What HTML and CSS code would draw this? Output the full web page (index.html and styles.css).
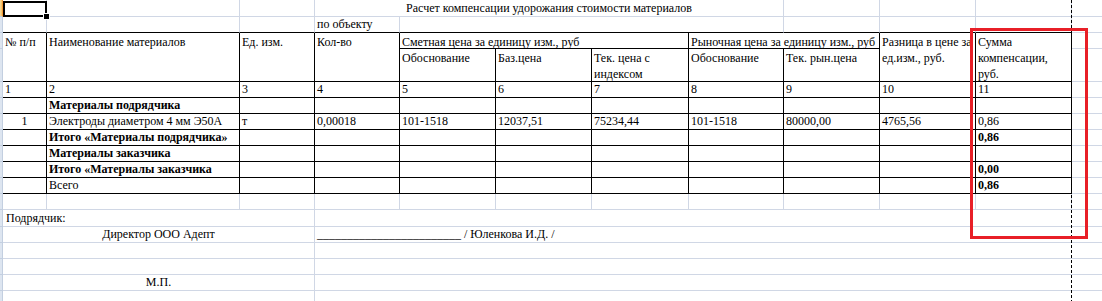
FILE: index.html
```html
<!DOCTYPE html>
<html lang="ru">
<head>
<meta charset="utf-8">
<title>Расчет компенсации удорожания стоимости материалов</title>
<link rel="stylesheet" href="styles.css">
</head>
<body>
<div class="sheet">
  <div class="grid">
    <!-- row 1 -->
    <div class="rh rh-sel"></div>
    <div class="c"></div><div class="c"></div><div class="c"></div>
    <div class="c s5 center">Расчет компенсации удорожания стоимости материалов</div>
    <div class="c"></div><div class="c"></div><div class="c"></div><div class="c"></div>
    <!-- row 2 -->
    <div class="rh"></div>
    <div class="c tt"></div><div class="c tt"></div><div class="c tt"></div>
    <div class="c tt">по объекту</div>
    <div class="c tt s4"></div>
    <div class="c tt"></div><div class="c tt"></div><div class="c tt"></div><div class="c"></div>
    <!-- rows 3-4 header -->
    <div class="rh"></div>
    <div class="c t r2 top">№ п/п</div>
    <div class="c t r2 top">Наименование материалов</div>
    <div class="c t r2 top">Ед. изм.</div>
    <div class="c t r2 top">Кол-во</div>
    <div class="c t s3 top">Сметная цена за единицу изм., руб</div>
    <div class="c t s2 top">Рыночная цена за единицу изм., руб</div>
    <div class="c t r2 top">Разница в цене за<br>ед.изм., руб.</div>
    <div class="c t r2 top">Сумма<br>компенсации,<br>руб.</div>
    <div class="c"></div>
    <div class="rh"></div>
    <div class="c t top">Обоснование</div>
    <div class="c t top">Баз.цена</div>
    <div class="c t top">Тек. цена с<br>индексом</div>
    <div class="c t top">Обоснование</div>
    <div class="c t top">Тек. рын.цена</div>
    <div class="c"></div>
    <!-- row 5 -->
    <div class="rh"></div>
    <div class="c t">1</div><div class="c t">2</div><div class="c t">3</div><div class="c t">4</div>
    <div class="c t">5</div><div class="c t">6</div><div class="c t">7</div><div class="c t">8</div>
    <div class="c t">9</div><div class="c t">10</div><div class="c t">11</div><div class="c"></div>
    <!-- row 6 -->
    <div class="rh"></div>
    <div class="c t"></div><div class="c t b">Материалы подрядчика</div>
    <div class="c t"></div><div class="c t"></div><div class="c t"></div><div class="c t"></div>
    <div class="c t"></div><div class="c t"></div><div class="c t"></div><div class="c t"></div>
    <div class="c t"></div><div class="c"></div>
    <!-- row 7 -->
    <div class="rh"></div>
    <div class="c t center">1</div>
    <div class="c t">Электроды диаметром 4 мм Э50А</div>
    <div class="c t">т</div>
    <div class="c t">0,00018</div>
    <div class="c t">101-1518</div>
    <div class="c t">12037,51</div>
    <div class="c t">75234,44</div>
    <div class="c t">101-1518</div>
    <div class="c t">80000,00</div>
    <div class="c t">4765,56</div>
    <div class="c t">0,86</div>
    <div class="c"></div>
    <!-- row 8 -->
    <div class="rh"></div>
    <div class="c t"></div><div class="c t b">Итого «Материалы подрядчика»</div>
    <div class="c t"></div><div class="c t"></div><div class="c t"></div><div class="c t"></div>
    <div class="c t"></div><div class="c t"></div><div class="c t"></div><div class="c t"></div>
    <div class="c t b">0,86</div><div class="c"></div>
    <!-- row 9 -->
    <div class="rh"></div>
    <div class="c t"></div><div class="c t b">Материалы заказчика</div>
    <div class="c t"></div><div class="c t"></div><div class="c t"></div><div class="c t"></div>
    <div class="c t"></div><div class="c t"></div><div class="c t"></div><div class="c t"></div>
    <div class="c t"></div><div class="c"></div>
    <!-- row 10 -->
    <div class="rh"></div>
    <div class="c t"></div><div class="c t b">Итого «Материалы заказчика</div>
    <div class="c t"></div><div class="c t"></div><div class="c t"></div><div class="c t"></div>
    <div class="c t"></div><div class="c t"></div><div class="c t"></div><div class="c t"></div>
    <div class="c t b">0,00</div><div class="c"></div>
    <!-- row 11 -->
    <div class="rh"></div>
    <div class="c t"></div><div class="c t">Всего</div>
    <div class="c t"></div><div class="c t"></div><div class="c t"></div><div class="c t"></div>
    <div class="c t"></div><div class="c t"></div><div class="c t"></div><div class="c t"></div>
    <div class="c t b">0,86</div><div class="c"></div>
    <!-- row 12 -->
    <div class="rh"></div>
    <div class="c"></div><div class="c"></div><div class="c"></div><div class="c"></div>
    <div class="c"></div><div class="c"></div><div class="c"></div><div class="c"></div>
    <div class="c"></div><div class="c"></div><div class="c"></div><div class="c"></div>
    <!-- row 13 -->
    <div class="rh"></div>
    <div class="c s3 pad">Подрядчик:</div>
    <div class="c s9"></div>
    <!-- row 14 -->
    <div class="rh"></div>
    <div class="c s3 center">Директор ООО Адепт</div>
    <div class="c s9">________________________ / Юленкова И.Д. /</div>
    <!-- row 15 -->
    <div class="rh"></div>
    <div class="c s3"></div>
    <div class="c s9"></div>
    <!-- row 16 -->
    <div class="rh"></div>
    <div class="c s3"></div>
    <div class="c s9"></div>
    <!-- row 17 -->
    <div class="rh"></div>
    <div class="c s3 center">М.П.</div>
    <div class="c s9"></div>
    <!-- row 18 -->
    <div class="rh"></div>
    <div class="c s3"></div>
    <div class="c s9"></div>
  </div>

  <div class="selection"><span class="fill-handle"></span></div>
  <div class="page-break"></div>
  <div class="highlight"></div>
</div>
</body>
</html>
```

FILE: styles.css
```css
html, body {
  margin: 0;
  padding: 0;
  background: #ffffff;
  overflow: hidden;
}

.sheet {
  position: relative;
  width: 1102px;
  height: 301px;
  overflow: hidden;
  font-family: "Liberation Serif", "Times New Roman", serif;
  font-size: 12px;
  color: #000;
}

.grid {
  display: grid;
  grid-template-columns: 3px 44px 193px 75px 85px 96px 96px 97px 95px 96px 96px 96px 40px;
  grid-template-rows: 17px 16px 16px 33px 16px 16px 16px 16px 16px 16px 16px 16px 17px 16px 16px 16px 16px 16px;
}

.rh {
  background: #dde5f0;
  border-right: 1px solid #c3cfe0;
  border-bottom: 1px solid #c3cfe0;
}

.rh-sel {
  background: linear-gradient(to right, #f9d99f, #f1c15f);
  border-right-color: #f29536;
}

.c {
  box-sizing: border-box;
  border-right: 1px solid #d0d7e5;
  border-bottom: 1px solid #d0d7e5;
  padding: 0 2px;
  line-height: 15px;
  white-space: nowrap;
  overflow: visible;
  display: flex;
  align-items: flex-end;
  min-width: 0;
}

.c.t {
  border-right-color: #000;
  border-bottom-color: #000;
}

.c.tt {
  border-bottom-color: #000;
}

.c.top {
  display: block;
  line-height: 16px;
  padding-top: 1px;
}

.c.b {
  font-weight: bold;
}

.c.center {
  justify-content: center;
}

.c.pad {
  padding-left: 3px;
}

.s2 { grid-column: span 2; }
.s3 { grid-column: span 3; }
.s4 { grid-column: span 4; }
.s5 { grid-column: span 5; }
.s9 { grid-column: span 9; }
.r2 { grid-row: span 2; }

.selection {
  position: absolute;
  left: 3px;
  top: 1px;
  width: 40px;
  height: 12px;
  border: 2px solid #000;
}

.fill-handle {
  position: absolute;
  right: -5px;
  bottom: -5px;
  width: 5px;
  height: 5px;
  background: #000;
  border: 1px solid #fff;
}

.page-break {
  position: absolute;
  left: 1071px;
  top: 0;
  width: 1px;
  height: 301px;
  background: repeating-linear-gradient(to bottom, #000 0 3px, transparent 3px 5px);
}

.highlight {
  position: absolute;
  left: 970px;
  top: 28px;
  width: 112px;
  height: 205px;
  border: 3px solid #e81f27;
}
```
